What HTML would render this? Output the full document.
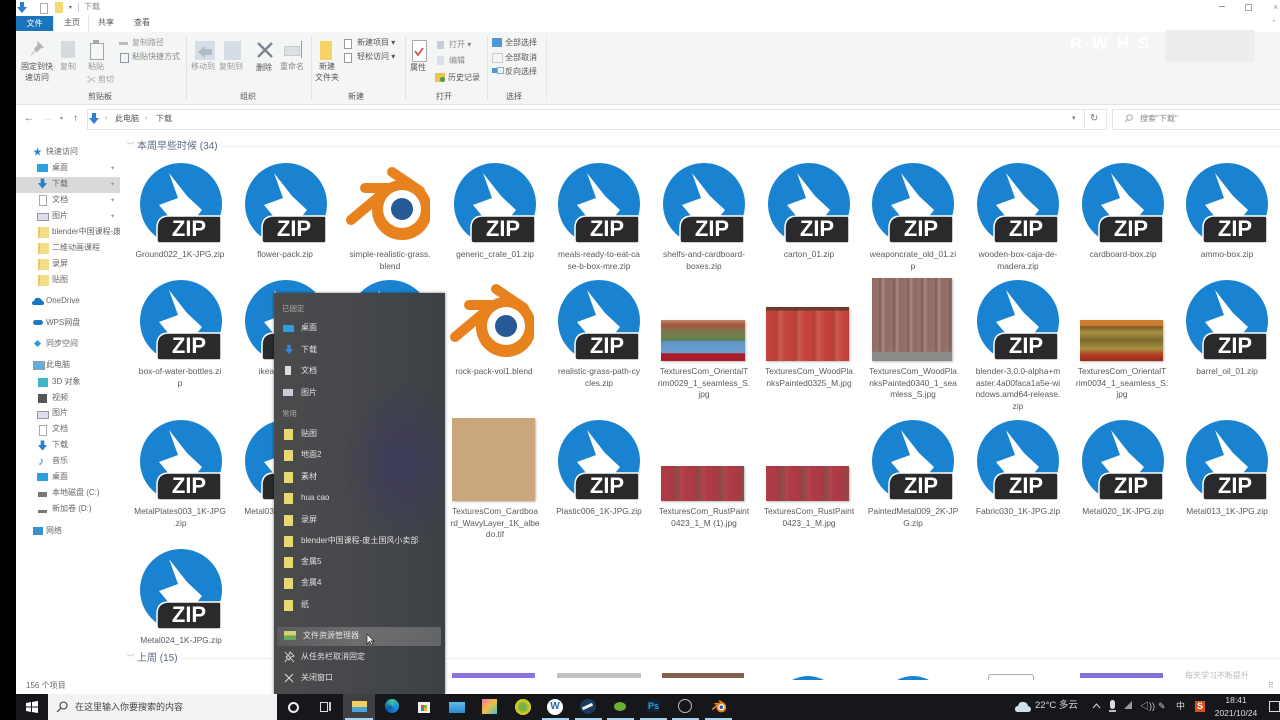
<!DOCTYPE html>
<html lang="zh"><head><meta charset="utf-8"><title>下载</title>
<style>
html,body{margin:0;padding:0;background:#fff;overflow:hidden}
#r{position:absolute;left:0;top:0;width:1280px;height:720px;overflow:hidden;background:#fff;font-family:"Liberation Sans","Noto Sans CJK SC",sans-serif;color:#555;font-size:8px;filter:blur(.35px)}
#r div,#r svg,#r span,#r p{position:absolute}
.t{white-space:nowrap;line-height:12px;margin:0}
.c{transform:translateX(-50%)}
.l{width:110px;margin:1px 0 0 -55px;text-align:center;font-size:8.4px;line-height:11.5px;white-space:nowrap;color:#5a5a5a}
.z{width:82px;height:82px}
.z svg{left:0;top:0}
.z b{position:absolute;left:17px;width:64px;top:52px;text-align:center;color:#fff;font:bold 22px/28px "Liberation Sans",sans-serif;letter-spacing:0}
.s{color:#666;font-size:8px}
.m{color:#e2e2e2;font-size:8px;left:301px}
.f{width:9px;height:11px;background:#f3dc8a;border-left:2px solid #e9c96a}
.mf{left:284px;width:9px;height:11px;background:#e7d873}
.u{top:718px;width:27px;height:2px;background:#a8d4ee}
</style></head><body>
<svg width="0" height="0" style="position:absolute;left:0;top:0"><defs>
<symbol id="zi" viewBox="0 0 82 82"><circle cx="41" cy="41" r="41" fill="#1a83d1"/><rect x="0" y="79" width="82" height="3" fill="#fff"/><path d="M29 10 47 33 62 47 50 62 34 60 19 42 38 35Z" fill="#fff"/><path d="M29 53H79Q81 53 81 55V78Q81 80 79 80H20Q17 80 17 77V65Q17 53 29 53Z" fill="#2a2a2c" stroke="#fff" stroke-width="1.5"/></symbol>
<symbol id="bl" viewBox="0 0 90 90"><g fill="none" stroke="#e8821e" stroke-width="10" stroke-linecap="round"><path d="M52 12 80 31"/><path d="M25 28H58"/><path d="M11 60 42 34"/></g><circle cx="62" cy="50" r="30" fill="#e8821e"/><circle cx="62" cy="49" r="19" fill="#fff"/><circle cx="62" cy="49" r="11" fill="#255a96"/></symbol>
</defs></svg>
<div id="r">

<!-- left black strip -->
<div style="left:0;top:0;width:16px;height:720px;background:#000;z-index:9"></div>

<!-- title bar -->
<svg style="left:16px;top:2px" width="12" height="12" viewBox="0 0 12 12"><path d="M4 0H8V5H11L6 11 1 5H4Z" fill="#2a7fd0"/></svg>
<div style="left:40px;top:3px;width:6px;height:9px;border:1px solid #aaa;background:#fff"></div>
<div style="left:55px;top:2px;width:8px;height:11px;background:#f6d976"></div>
<div class="t" style="left:84px;top:1px;color:#888">下载</div>
<div class="t" style="left:69px;top:2px;color:#666;font-size:6px">▾</div>
<div style="left:78px;top:3px;width:1px;height:9px;background:#ccc"></div>
<div style="left:1219px;top:6px;width:6px;height:1px;background:#999"></div>
<div style="left:1245px;top:4px;width:5px;height:5px;border:1px solid #aaa"></div>
<div class="t" style="left:1273px;top:1px;color:#999;font-size:9px">×</div>
<div class="t" style="left:1271px;top:18px;color:#999;font-size:7px">⌃</div>

<!-- tabs -->
<div class="t" style="left:16px;top:16px;width:37px;height:15px;background:#1b75bc;color:#fff;text-align:center;line-height:15px">文件</div>
<div style="left:53px;top:15px;width:34px;height:17px;background:#fff;border-left:1px solid #e6e6e6;border-right:1px solid #e6e6e6"></div>
<div class="t" style="left:64px;top:17px">主页</div>
<div class="t" style="left:98px;top:17px">共享</div>
<div class="t" style="left:134px;top:17px">查看</div>

<!-- ribbon -->
<div style="left:16px;top:32px;width:1264px;height:72px;background:#f4f6f6;border-bottom:1px solid #e4e4e4"></div>
<div style="left:186px;top:36px;width:1px;height:64px;background:#e2e2e2"></div>
<div style="left:311px;top:36px;width:1px;height:64px;background:#e2e2e2"></div>
<div style="left:405px;top:36px;width:1px;height:64px;background:#e2e2e2"></div>
<div style="left:487px;top:36px;width:1px;height:64px;background:#e2e2e2"></div>
<div style="left:546px;top:36px;width:1px;height:64px;background:#e8e8e8"></div>

<!-- ribbon icons -->
<svg style="left:29px;top:41px" width="16" height="16" viewBox="0 0 18 18"><path d="M10 1 16 7 13 8 9 12 6 9 10 5ZM7 11 2 16" fill="#b5b5b5" stroke="#b5b5b5"/></svg>
<div style="left:61px;top:41px;width:14px;height:17px;background:#d6dbe0"></div>
<div style="left:90px;top:43px;width:12px;height:15px;border:1px solid #9fa6ad;background:#f6f6f6"></div>
<div style="left:93px;top:40px;width:6px;height:3px;background:#a8a8a8"></div>
<div style="left:195px;top:41px;width:20px;height:19px;background:#d5dde6"></div>
<svg style="left:198px;top:46px" width="14" height="12" viewBox="0 0 14 12"><path d="M7 0V3H14V9H7V12L0 6Z" fill="#b1bcc8"/></svg>
<div style="left:224px;top:41px;width:17px;height:19px;background:#d5dde6"></div>
<svg style="left:256px;top:41px" width="18" height="18" viewBox="0 0 18 18"><path d="M2 2 16 16M16 2 2 16" stroke="#7c8794" stroke-width="2.5"/></svg>
<div style="left:284px;top:46px;width:14px;height:8px;background:#dde0e3;border:1px solid #c8cccf"></div>
<div style="left:301px;top:41px;width:1px;height:17px;background:#999"></div>
<div style="left:320px;top:41px;width:12px;height:19px;background:#f5d365"></div>
<div style="left:344px;top:39px;width:6px;height:8px;border:1px solid #9a9a9a;background:#fff"></div>
<div style="left:344px;top:53px;width:6px;height:8px;border:1px solid #9a9a9a;background:#fff"></div>
<div style="left:412px;top:40px;width:13px;height:20px;border:1px solid #aaa;background:#fff"></div>
<svg style="left:414px;top:47px" width="10" height="9" viewBox="0 0 10 9"><path d="M1 4 4 8 9 1" fill="none" stroke="#d8433c" stroke-width="1.6"/></svg>
<div style="left:437px;top:41px;width:7px;height:8px;background:#c6cdd4"></div>
<div style="left:437px;top:56px;width:7px;height:9px;background:#dbe1e7"></div>
<div style="left:435px;top:73px;width:10px;height:9px;background:#e8c450"></div>
<div style="left:440px;top:77px;width:5px;height:5px;border-radius:50%;background:#4a9a50"></div>
<div style="left:492px;top:38px;width:10px;height:9px;background:#4f96d6"></div>
<div style="left:492px;top:53px;width:9px;height:8px;border:1px solid #ccc"></div>
<div style="left:492px;top:68px;width:5px;height:5px;background:#4f96d6"></div>
<div style="left:497px;top:67px;width:5px;height:5px;border:1px solid #9ab"></div>
<div style="left:119px;top:42px;width:9px;height:3px;background:#bbb"></div>
<div style="left:120px;top:53px;width:7px;height:8px;border:1px solid #8a98a8"></div>
<div class="t" style="left:87px;top:74px;color:#999;font-size:9px">✂</div>

<!-- ribbon labels -->
<div class="t c" style="left:37px;top:61px">固定到快</div>
<div class="t c" style="left:37px;top:72px">速访问</div>
<div class="t c" style="left:68px;top:61px;color:#999">复制</div>
<div class="t c" style="left:96px;top:61px;color:#999">粘贴</div>
<div class="t" style="left:98px;top:74px;color:#999">剪切</div>
<div class="t" style="left:132px;top:37px;color:#999">复制路径</div>
<div class="t" style="left:132px;top:51px;color:#888">粘贴快捷方式</div>
<div class="t c" style="left:100px;top:91px">剪贴板</div>
<div class="t c" style="left:203px;top:61px;color:#999">移动到</div>
<div class="t c" style="left:231px;top:61px;color:#999">复制到</div>
<div class="t c" style="left:264px;top:62px">删除</div>
<div class="t c" style="left:292px;top:61px;color:#888">重命名</div>
<div class="t c" style="left:248px;top:91px">组织</div>
<div class="t c" style="left:327px;top:61px">新建</div>
<div class="t c" style="left:327px;top:72px">文件夹</div>
<div class="t" style="left:357px;top:37px">新建项目 ▾</div>
<div class="t" style="left:357px;top:51px">轻松访问 ▾</div>
<div class="t c" style="left:356px;top:91px">新建</div>
<div class="t c" style="left:418px;top:62px">属性</div>
<div class="t" style="left:449px;top:39px;color:#888">打开 ▾</div>
<div class="t" style="left:449px;top:55px;color:#888">编辑</div>
<div class="t" style="left:448px;top:72px">历史记录</div>
<div class="t c" style="left:444px;top:91px">打开</div>
<div class="t" style="left:505px;top:37px">全部选择</div>
<div class="t" style="left:505px;top:52px">全部取消</div>
<div class="t" style="left:505px;top:66px">反向选择</div>
<div class="t c" style="left:514px;top:91px">选择</div>

<!-- watermark -->
<div class="t" style="left:1070px;top:34px;color:#fff;font-size:17px;line-height:20px;font-weight:bold;letter-spacing:2px">R-W H S</div>
<div style="left:1165px;top:30px;width:90px;height:32px;background:#eceeee"></div>

<!-- address row -->
<div class="t" style="left:24px;top:113px;font-size:10px;color:#666">←</div>
<div class="t" style="left:43px;top:113px;font-size:10px;color:#ccc">→</div>
<div class="t" style="left:60px;top:113px;font-size:6px;color:#888">▾</div>
<div class="t" style="left:73px;top:113px;font-size:10px;color:#666">↑</div>
<div style="left:87px;top:109px;width:1018px;height:19px;border:1px solid #e4e4e4;background:#fff"></div>
<svg style="left:88px;top:113px" width="12" height="12" viewBox="0 0 12 12"><path d="M4 0H8V5H11L6 11 1 5H4Z" fill="#2a7fd0"/></svg>
<div class="t" style="left:105px;top:113px;font-size:7px;color:#888">›</div>
<div class="t" style="left:115px;top:113px">此电脑</div>
<div class="t" style="left:145px;top:113px;font-size:7px;color:#888">›</div>
<div class="t" style="left:156px;top:113px">下载</div>
<div class="t" style="left:1072px;top:113px;font-size:7px;color:#777">▾</div>
<div style="left:1084px;top:110px;width:1px;height:18px;background:#e4e4e4"></div>
<div class="t" style="left:1090px;top:113px;font-size:10px;color:#777">↻</div>
<div style="left:1112px;top:109px;width:170px;height:19px;border:1px solid #e4e4e4;background:#fff"></div>
<svg style="left:1124px;top:114px" width="9" height="9" viewBox="0 0 9 9"><circle cx="5.5" cy="3.5" r="2.8" fill="none" stroke="#aaa"/><path d="M3.5 5.5 1 8" stroke="#aaa"/></svg>
<div class="t" style="left:1140px;top:113px;color:#888">搜索"下载"</div>

<!-- sidebar -->
<div style="left:16px;top:177px;width:104px;height:16px;background:#d9d9d9"></div>
<div class="t" style="left:33px;top:146px;font-size:9px;color:#2a7fd0">★</div>
<div class="t s" style="left:46px;top:146px">快速访问</div>
<div style="left:37px;top:164px;width:11px;height:8px;background:#2b9fe0"></div><div class="t s" style="left:52px;top:162px">桌面</div>
<svg style="left:37px;top:178px" width="11" height="12" viewBox="0 0 12 12"><path d="M4 0H8V5H11L6 11 1 5H4Z" fill="#2a7fd0"/></svg><div class="t s" style="left:52px;top:178px">下载</div>
<div style="left:39px;top:195px;width:6px;height:9px;border:1px solid #aaa;background:#fff"></div><div class="t s" style="left:52px;top:194px">文档</div>
<div style="left:37px;top:213px;width:10px;height:6px;border:1px solid #999;background:#dde"></div><div class="t s" style="left:52px;top:210px">图片</div>
<div class="f" style="left:38px;top:227px"></div><div class="t s" style="left:52px;top:226px;width:68px;overflow:hidden">blender中国课程-废</div>
<div class="f" style="left:38px;top:243px"></div><div class="t s" style="left:52px;top:242px">二维动画课程</div>
<div class="f" style="left:38px;top:259px"></div><div class="t s" style="left:52px;top:258px">录屏</div>
<div class="f" style="left:38px;top:275px"></div><div class="t s" style="left:52px;top:274px">贴图</div>
<svg style="left:32px;top:297px" width="12" height="8" viewBox="0 0 12 8"><path d="M2 8Q0 8 0 6 0 4 2 4 3 0 7 1 10 2 10 4 12 4 12 6 12 8 10 8Z" fill="#1576c4"/></svg><div class="t s" style="left:46px;top:295px">OneDrive</div>
<div style="left:33px;top:320px;width:10px;height:5px;background:#1f7bc4;border-radius:3px"></div><div class="t s" style="left:46px;top:317px">WPS网盘</div>
<div style="left:35px;top:341px;width:5px;height:5px;background:#2e9bd5;transform:rotate(45deg)"></div><div class="t s" style="left:46px;top:338px">同步空间</div>
<div style="left:33px;top:361px;width:10px;height:7px;background:#5fb0e0;border:1px solid #999"></div><div class="t s" style="left:46px;top:359px">此电脑</div>
<div style="left:38px;top:378px;width:10px;height:9px;background:#3fb6c8"></div><div class="t s" style="left:52px;top:376px">3D 对象</div>
<div style="left:38px;top:394px;width:9px;height:9px;background:#555"></div><div class="t s" style="left:52px;top:392px">视频</div>
<div style="left:37px;top:411px;width:10px;height:6px;border:1px solid #999;background:#dde"></div><div class="t s" style="left:52px;top:407px">图片</div>
<div style="left:39px;top:425px;width:6px;height:9px;border:1px solid #aaa;background:#fff"></div><div class="t s" style="left:52px;top:423px">文档</div>
<svg style="left:37px;top:440px" width="11" height="12" viewBox="0 0 12 12"><path d="M4 0H8V5H11L6 11 1 5H4Z" fill="#2a7fd0"/></svg><div class="t s" style="left:52px;top:439px">下载</div>
<div class="t" style="left:38px;top:454px;font-size:12px;color:#2a8fd8;line-height:14px">♪</div><div class="t s" style="left:52px;top:455px">音乐</div>
<div style="left:37px;top:473px;width:11px;height:8px;background:#2b9fe0"></div><div class="t s" style="left:52px;top:471px">桌面</div>
<div style="left:38px;top:492px;width:9px;height:5px;background:#777"></div><div class="t s" style="left:52px;top:487px">本地磁盘 (C:)</div>
<div style="left:38px;top:510px;width:9px;height:3px;background:#777"></div><div class="t s" style="left:52px;top:503px">新加卷 (D:)</div>
<div style="left:33px;top:527px;width:10px;height:8px;background:#3a8fd0"></div><div class="t s" style="left:46px;top:525px">网络</div>
<div class="t" style="left:110px;top:163px;font-size:6px;color:#999">✦</div>
<div class="t" style="left:110px;top:179px;font-size:6px;color:#999">✦</div>
<div class="t" style="left:110px;top:195px;font-size:6px;color:#999">✦</div>
<div class="t" style="left:110px;top:211px;font-size:6px;color:#999">✦</div>

<!-- group headers -->
<div class="t" style="left:127px;top:141px;font-size:7px;color:#999">﹀</div>
<div class="t" style="left:137px;top:141px;font-size:10px;color:#5a6a80">本周早些时候 (34)</div>
<div style="left:222px;top:146px;width:1058px;height:1px;background:#eee"></div>
<div class="t" style="left:127px;top:653px;font-size:7px;color:#999">﹀</div>
<div class="t" style="left:137px;top:653px;font-size:10px;color:#5a6a80">上周 (15)</div>
<div style="left:182px;top:658px;width:1098px;height:1px;background:#eee"></div>

<!-- row 1 -->
<div class="z" style="left:140px;top:163px"><svg width="82" height="82"><use href="#zi"/></svg><b>ZIP</b></div>
<div class="z" style="left:245px;top:163px"><svg width="82" height="82"><use href="#zi"/></svg><b>ZIP</b></div>
<svg style="left:340px;top:160px" width="90" height="90"><use href="#bl"/></svg>
<div class="z" style="left:454px;top:163px"><svg width="82" height="82"><use href="#zi"/></svg><b>ZIP</b></div>
<div class="z" style="left:558px;top:163px"><svg width="82" height="82"><use href="#zi"/></svg><b>ZIP</b></div>
<div class="z" style="left:663px;top:163px"><svg width="82" height="82"><use href="#zi"/></svg><b>ZIP</b></div>
<div class="z" style="left:768px;top:163px"><svg width="82" height="82"><use href="#zi"/></svg><b>ZIP</b></div>
<div class="z" style="left:872px;top:163px"><svg width="82" height="82"><use href="#zi"/></svg><b>ZIP</b></div>
<div class="z" style="left:977px;top:163px"><svg width="82" height="82"><use href="#zi"/></svg><b>ZIP</b></div>
<div class="z" style="left:1082px;top:163px"><svg width="82" height="82"><use href="#zi"/></svg><b>ZIP</b></div>
<div class="z" style="left:1186px;top:163px"><svg width="82" height="82"><use href="#zi"/></svg><b>ZIP</b></div>
<p class="l" style="left:180px;top:248px">Ground022_1K-JPG.zip</p>
<p class="l" style="left:285px;top:248px">flower-pack.zip</p>
<p class="l" style="left:390px;top:248px">simple-realistic-grass.<br>blend</p>
<p class="l" style="left:495px;top:248px">generic_crate_01.zip</p>
<p class="l" style="left:599px;top:248px">meals-ready-to-eat-ca<br>se-b-box-mre.zip</p>
<p class="l" style="left:704px;top:248px">shelfs-and-cardboard-<br>boxes.zip</p>
<p class="l" style="left:809px;top:248px">carton_01.zip</p>
<p class="l" style="left:913px;top:248px">weaponcrate_old_01.zi<br>p</p>
<p class="l" style="left:1018px;top:248px">wooden-box-caja-de-<br>madera.zip</p>
<p class="l" style="left:1123px;top:248px">cardboard-box.zip</p>
<p class="l" style="left:1227px;top:248px">ammo-box.zip</p>

<!-- row 2 -->
<div class="z" style="left:140px;top:280px"><svg width="82" height="82"><use href="#zi"/></svg><b>ZIP</b></div>
<div class="z" style="left:245px;top:280px"><svg width="82" height="82"><use href="#zi"/></svg><b>ZIP</b></div>
<div class="z" style="left:349px;top:280px"><svg width="82" height="82"><use href="#zi"/></svg><b>ZIP</b></div>
<svg style="left:444px;top:277px" width="90" height="90"><use href="#bl"/></svg>
<div class="z" style="left:558px;top:280px"><svg width="82" height="82"><use href="#zi"/></svg><b>ZIP</b></div>
<div style="left:661px;top:320px;width:84px;height:41px;box-shadow:1px 1px 2px #bbb;background:linear-gradient(#c08a6a 0,#a8503c 12%,#8a6a48 20%,#6f8250 40%,#5c7a4c 50%,#5e93c8 52%,#6aa0cc 80%,#a81e2c 82%,#a81e2c 100%)"></div>
<div style="left:766px;top:307px;width:83px;height:54px;box-shadow:1px 1px 2px #bbb;background:linear-gradient(#6a3a2c 0,#6a3a2c 6%,transparent 7%),repeating-linear-gradient(90deg,#c4473f 0,#bf3f38 9px,#a8403a 10px,#cf5a50 14px,#c4473f 19px)"></div>
<div style="left:872px;top:278px;width:80px;height:83px;box-shadow:1px 1px 2px #bbb;background:linear-gradient(transparent 0,transparent 88%,#8a8a88 90%),repeating-linear-gradient(90deg,#8f6a62 0,#96736a 6px,#7d5e58 8px,#a88a80 11px,#8f6a62 14px)"></div>
<div class="z" style="left:977px;top:280px"><svg width="82" height="82"><use href="#zi"/></svg><b>ZIP</b></div>
<div style="left:1080px;top:320px;width:83px;height:41px;box-shadow:1px 1px 2px #bbb;background:linear-gradient(#d08030 0,#c97a2c 14%,#7a5a28 16%,#a89040 30%,#7c6a30 50%,#a89040 70%,#b04024 84%,#9a2a1a 100%)"></div>
<div class="z" style="left:1186px;top:280px"><svg width="82" height="82"><use href="#zi"/></svg><b>ZIP</b></div>
<p class="l" style="left:180px;top:365px">box-of-water-bottles.zi<br>p</p>
<p class="l" style="left:285px;top:365px">ikea-kallax.zip</p>
<p class="l" style="left:494px;top:365px">rock-pack-vol1.blend</p>
<p class="l" style="left:599px;top:365px">realistic-grass-path-cy<br>cles.zip</p>
<p class="l" style="left:704px;top:365px">TexturesCom_OrientalT<br>rim0029_1_seamless_S.<br>jpg</p>
<p class="l" style="left:809px;top:365px">TexturesCom_WoodPla<br>nksPainted0325_M.jpg</p>
<p class="l" style="left:913px;top:365px">TexturesCom_WoodPla<br>nksPainted0340_1_sea<br>mless_S.jpg</p>
<p class="l" style="left:1018px;top:365px">blender-3.0.0-alpha+m<br>aster.4a00faca1a5e-wi<br>ndows.amd64-release.<br>zip</p>
<p class="l" style="left:1122px;top:365px">TexturesCom_OrientalT<br>rim0034_1_seamless_S.<br>jpg</p>
<p class="l" style="left:1227px;top:365px">barrel_oil_01.zip</p>

<!-- row 3 -->
<div class="z" style="left:140px;top:420px"><svg width="82" height="82"><use href="#zi"/></svg><b>ZIP</b></div>
<div class="z" style="left:245px;top:420px"><svg width="82" height="82"><use href="#zi"/></svg><b>ZIP</b></div>
<div style="left:452px;top:418px;width:83px;height:83px;background:#c9a77b;box-shadow:1px 1px 2px #bbb"></div>
<div class="z" style="left:558px;top:420px"><svg width="82" height="82"><use href="#zi"/></svg><b>ZIP</b></div>
<div style="left:661px;top:466px;width:83px;height:35px;box-shadow:1px 1px 2px #bbb;background:repeating-linear-gradient(90deg,#b03c46 0,#a83a44 12px,#8a4a48 15px,#b8444e 22px)"></div>
<div style="left:766px;top:466px;width:83px;height:35px;box-shadow:1px 1px 2px #bbb;background:repeating-linear-gradient(90deg,#b03c46 0,#a83a44 12px,#8a4a48 15px,#b8444e 22px)"></div>
<div class="z" style="left:872px;top:420px"><svg width="82" height="82"><use href="#zi"/></svg><b>ZIP</b></div>
<div class="z" style="left:977px;top:420px"><svg width="82" height="82"><use href="#zi"/></svg><b>ZIP</b></div>
<div class="z" style="left:1082px;top:420px"><svg width="82" height="82"><use href="#zi"/></svg><b>ZIP</b></div>
<div class="z" style="left:1186px;top:420px"><svg width="82" height="82"><use href="#zi"/></svg><b>ZIP</b></div>
<p class="l" style="left:180px;top:505px">MetalPlates003_1K-JPG<br>.zip</p>
<p class="l" style="left:285px;top:505px">Metal034_1K-JPG.zip</p>
<p class="l" style="left:495px;top:505px">TexturesCom_Cardboa<br>rd_WavyLayer_1K_albe<br>do.tif</p>
<p class="l" style="left:599px;top:505px">Plastic006_1K-JPG.zip</p>
<p class="l" style="left:704px;top:505px">TexturesCom_RustPaint<br>0423_1_M (1).jpg</p>
<p class="l" style="left:809px;top:505px">TexturesCom_RustPaint<br>0423_1_M.jpg</p>
<p class="l" style="left:913px;top:505px">PaintedMetal009_2K-JP<br>G.zip</p>
<p class="l" style="left:1018px;top:505px">Fabric030_1K-JPG.zip</p>
<p class="l" style="left:1123px;top:505px">Metal020_1K-JPG.zip</p>
<p class="l" style="left:1227px;top:505px">Metal013_1K-JPG.zip</p>

<!-- row 4 -->
<div class="z" style="left:140px;top:549px"><svg width="82" height="82"><use href="#zi"/></svg><b>ZIP</b></div>
<p class="l" style="left:181px;top:634px">Metal024_1K-JPG.zip</p>

<!-- next group peek -->
<div style="left:452px;top:673px;width:83px;height:5px;background:#8a72e0"></div>
<div style="left:557px;top:673px;width:84px;height:5px;background:#c2c2c2"></div>
<div style="left:662px;top:673px;width:82px;height:5px;background:#84604e"></div>
<svg style="left:792px;top:675px" width="32" height="5"><path d="M0 5Q16 -3 32 5Z" fill="#1a83d1"/></svg>
<svg style="left:897px;top:675px" width="32" height="5"><path d="M0 5Q16 -3 32 5Z" fill="#1a83d1"/></svg>
<div style="left:988px;top:674px;width:44px;height:5px;border:1px solid #aaa;border-bottom:0;border-radius:3px 3px 0 0"></div>
<div style="left:1080px;top:673px;width:83px;height:5px;background:#8472dc"></div>
<div class="t" style="left:1185px;top:670px;color:#bbb;font-size:8px">每天学习不断提升</div>

<!-- status -->
<div class="t" style="left:26px;top:680px;color:#666">156 个项目</div>
<div class="t" style="left:1268px;top:680px;color:#999;font-size:8px">⠿</div>

<!-- context menu -->
<div style="left:274px;top:293px;width:171px;height:401px;box-shadow:0 0 3px rgba(0,0,0,.5);background:radial-gradient(ellipse 55px 80px at 125px 170px,#3e3b5c,transparent),linear-gradient(90deg,#4a4b4d,#45474a 50%,#3d4046)"></div>
<div class="t" style="left:282px;top:303px;color:#aaa;font-size:7.5px">已固定</div>
<div style="left:283px;top:325px;width:11px;height:7px;background:#2b9fe0"></div><div class="t m" style="top:322px">桌面</div>
<svg style="left:284px;top:344px" width="10" height="12" viewBox="0 0 12 12"><path d="M4 0H8V5H11L6 11 1 5H4Z" fill="#3a85d6"/></svg><div class="t m" style="top:344px">下载</div>
<div style="left:285px;top:366px;width:6px;height:9px;background:#ddd"></div><div class="t m" style="top:365px">文档</div>
<div style="left:283px;top:389px;width:10px;height:7px;background:#ccd"></div><div class="t m" style="top:387px">图片</div>
<div class="t" style="left:282px;top:408px;color:#aaa;font-size:7.5px">常用</div>
<div class="mf" style="top:429px"></div><div class="t m" style="top:428px">贴图</div>
<div class="mf" style="top:450px"></div><div class="t m" style="top:449px">地面2</div>
<div class="mf" style="top:472px"></div><div class="t m" style="top:471px">素材</div>
<div class="mf" style="top:493px"></div><div class="t m" style="top:492px">hua cao</div>
<div class="mf" style="top:515px"></div><div class="t m" style="top:514px">录屏</div>
<div class="mf" style="top:536px"></div><div class="t m" style="top:535px">blender中国课程-废土国风小卖部</div>
<div class="mf" style="top:557px"></div><div class="t m" style="top:556px">金属5</div>
<div class="mf" style="top:578px"></div><div class="t m" style="top:577px">金属4</div>
<div class="mf" style="top:600px"></div><div class="t m" style="top:599px">纸</div>
<div style="left:277px;top:627px;width:164px;height:19px;background:linear-gradient(90deg,#5a5b5c,#6d6e6f 50%,#646566);border-radius:2px"></div>
<div style="left:284px;top:631px;width:12px;height:9px;background:linear-gradient(#d8d070 50%,#6aa860 50%)"></div><div class="t m" style="left:303px;top:630px">文件资源管理器</div>
<svg style="left:366px;top:633px" width="9" height="13" viewBox="0 0 9 13"><path d="M1 1V11L3.5 8.5 5.5 12 7 11 5 8 8 8Z" fill="#fff" stroke="#222" stroke-width=".7"/></svg>
<svg style="left:284px;top:651px" width="11" height="12" viewBox="0 0 11 12"><path d="M6 1 10 5 7 6 5 9 2 6 5 4ZM3 8 1 11M1 1 10 11" fill="none" stroke="#ddd" stroke-width=".9"/></svg><div class="t m" style="top:651px">从任务栏取消固定</div>
<svg style="left:284px;top:673px" width="10" height="10" viewBox="0 0 10 10"><path d="M1 1 9 9M9 1 1 9" stroke="#ddd"/></svg><div class="t m" style="top:672px">关闭窗口</div>

<!-- taskbar -->
<div style="left:16px;top:694px;width:1264px;height:26px;background:#15171a"></div>
<div style="left:48px;top:694px;width:229px;height:26px;background:#f3f3f3"></div>
<svg style="left:26px;top:701px" width="12" height="12" viewBox="0 0 12 12"><path d="M0 2 5 1V5.5H0ZM6 1 12 0V5.5H6ZM0 6.5H5V11L0 10ZM6 6.5H12V12L6 11Z" fill="#fff"/></svg>
<svg style="left:56px;top:701px" width="12" height="12" viewBox="0 0 12 12"><circle cx="7.5" cy="4.5" r="3.5" fill="none" stroke="#444" stroke-width="1.1"/><path d="M5 7 1 11" stroke="#444" stroke-width="1.2"/></svg>
<div class="t" style="left:75px;top:701px;font-size:9px;color:#444">在这里输入你要搜索的内容</div>
<div style="left:288px;top:702px;width:7px;height:7px;border:2px solid #eee;border-radius:50%"></div>
<div style="left:320px;top:702px;width:6px;height:8px;border:1px solid #ddd"></div>
<div style="left:329px;top:702px;width:2px;height:9px;background:#ccc"></div>
<div style="left:343px;top:694px;width:32px;height:26px;background:#3e4044"></div>
<div style="left:352px;top:701px;width:15px;height:11px;background:linear-gradient(#f2cf5c 55%,#4ba3d8 55%)"></div>
<div style="left:385px;top:699px;width:14px;height:14px;border-radius:50%;background:conic-gradient(#3ec6a4,#1a84d8,#0a5ea8,#3ec6a4)"></div>
<div style="left:418px;top:702px;width:12px;height:11px;background:#eee"></div>
<div style="left:421px;top:705px;width:3px;height:3px;background:#e4502c;box-shadow:3px 0 #7cb83c,0 3px #2a8ad8,3px 3px #eebb20"></div>
<div style="left:449px;top:702px;width:16px;height:11px;background:linear-gradient(#62b8e8,#2a8cd0)"></div>
<div style="left:482px;top:699px;width:15px;height:15px;background:linear-gradient(135deg,#e878a8,#f0c040 50%,#40c0d8)"></div>
<div style="left:515px;top:699px;width:16px;height:16px;border-radius:50%;background:radial-gradient(#7cb040 30%,#e8d820 70%)"></div>
<div class="t" style="left:547px;top:699px;width:16px;height:16px;border-radius:50%;background:#fff;color:#2a6ab0;text-align:center;line-height:16px;font-size:10px;font-weight:bold">W</div>
<div style="left:580px;top:699px;width:16px;height:15px;border-radius:50%;background:#1a3a60"></div>
<div style="left:582px;top:705px;width:11px;height:3px;background:#eee;transform:rotate(-25deg)"></div>
<div style="left:614px;top:702px;width:12px;height:9px;background:#6cb030;border-radius:50%"></div>
<div class="t" style="left:647px;top:700px;width:13px;color:#3a9ae0;font-size:9px;font-weight:bold;background:#0e2436;text-align:center">Ps</div>
<div style="left:678px;top:699px;width:12px;height:12px;border:1px solid #bbb;border-radius:50%"></div>
<svg style="left:711px;top:699px" width="15" height="15" viewBox="0 0 90 90"><use href="#bl"/></svg>
<div class="u" style="left:542px"></div><div class="u" style="left:575px"></div><div class="u" style="left:607px"></div><div class="u" style="left:640px"></div><div class="u" style="left:672px"></div><div class="u" style="left:705px"></div>
<div class="u" style="left:345px;width:28px"></div>

<svg style="left:1015px;top:701px" width="16" height="11" viewBox="0 0 16 11"><path d="M3 11Q0 11 0 8 0 5 3 5 4 0 9 1 13 2 13 5 16 6 16 8 16 11 13 11Z" fill="#cfe0ee"/></svg>
<div class="t" style="left:1035px;top:700px;font-size:9.5px;color:#ddd">22°C 多云</div>
<svg style="left:1092px;top:703px" width="9" height="6" viewBox="0 0 9 6"><path d="M1 5 4.5 1 8 5" fill="none" stroke="#ddd"/></svg>
<div style="left:1110px;top:700px;width:5px;height:9px;background:#ddd;border-radius:3px"></div>
<div style="left:1109px;top:710px;width:7px;height:2px;background:#bbb"></div>
<div class="t" style="left:1124px;top:700px;font-size:8px;color:#999">◢</div>
<div class="t" style="left:1140px;top:700px;font-size:9px;color:#ccc">◁))</div>
<div class="t" style="left:1158px;top:700px;font-size:9px;color:#ccc">✎</div>
<div class="t" style="left:1176px;top:700px;font-size:9px;color:#ddd">中</div>
<div class="t" style="left:1195px;top:701px;width:10px;height:11px;background:#d8501c;color:#fff;font-size:9px;font-weight:bold;text-align:center;line-height:11px">S</div>
<div class="t c" style="left:1236px;top:694px;font-size:8.5px;color:#ddd">18:41</div>
<div class="t c" style="left:1236px;top:707px;font-size:8.5px;color:#ddd">2021/10/24</div>
<div style="left:1269px;top:701px;width:9px;height:9px;border:1px solid #ddd"></div>
</div>
</body></html>
